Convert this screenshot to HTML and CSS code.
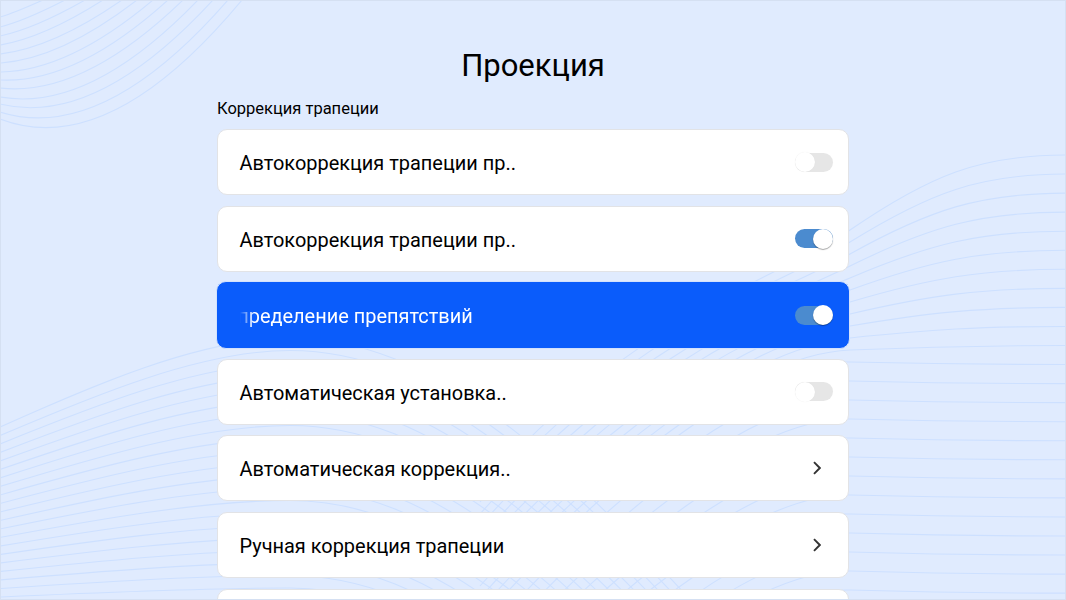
FILE: index.html
```html
<!DOCTYPE html>
<html lang="en">
<head>
    <meta charset="UTF-8">
    <meta name="viewport" content="width=device-width, initial-scale=1.0">
    <title>Проекция</title>
    <link rel="stylesheet" href="styles.css">
</head>
<body>
    <div class="screen">
        <svg class="wave-bg" id="wave-bg" width="1066" height="600" viewBox="0 0 1066 600" fill="none"></svg>

        <div class="main">
            <h1>Проекция</h1>
            <h2>Коррекция трапеции</h2>
            <div class="menu-list">
                <div class="menu-item">
                    <span class="menu-label">Автокоррекция трапеции пр..</span>
                    <span class="toggle"><span class="knob"></span></span>
                </div>
                <div class="menu-item">
                    <span class="menu-label">Автокоррекция трапеции пр..</span>
                    <span class="toggle on"><span class="knob"></span></span>
                </div>
                <div class="menu-item active">
                    <span class="menu-label marquee"><span class="marquee-text">Определение препятствий</span></span>
                    <span class="toggle on"><span class="knob"></span></span>
                </div>
                <div class="menu-item">
                    <span class="menu-label">Автоматическая установка..</span>
                    <span class="toggle"><span class="knob"></span></span>
                </div>
                <div class="menu-item">
                    <span class="menu-label">Автоматическая коррекция..</span>
                    <svg class="chevron" width="8" height="14" viewBox="0 0 8 14" fill="none"><path d="M1 1.2 L6.8 7 L1 12.8" stroke="#333" stroke-width="1.9"/></svg>
                </div>
                <div class="menu-item">
                    <span class="menu-label">Ручная коррекция трапеции</span>
                    <svg class="chevron" width="8" height="14" viewBox="0 0 8 14" fill="none"><path d="M1 1.2 L6.8 7 L1 12.8" stroke="#333" stroke-width="1.9"/></svg>
                </div>
                <div class="menu-item"></div>
            </div>
        </div>
    </div>

    <script src="waves.js"></script>
</body>
</html>
```

FILE: styles.css
```css
* {
    box-sizing: border-box;
}
body {
    margin: 0;
    font-family: Roboto, "Liberation Sans", sans-serif;
    color: #000;
}
.screen {
    position: relative;
    width: 1066px;
    height: 600px;
    overflow: hidden;
    background-color: #e0ebfe;
    border: 1px solid #d5e0f2;
}
.wave-bg {
    position: absolute;
    top: -1px;
    left: -1px;
}
.main {
    position: relative;
    width: 632px;
    margin: 0 auto;
}
h1 {
    margin: 0;
    padding-top: 44px;
    height: 89px;
    font-size: 31px;
    font-weight: 400;
    line-height: 42px;
    text-align: center;
}
h2 {
    margin: 0;
    height: 39px;
    padding-top: 7.5px;
    font-size: 16.5px;
    font-weight: 400;
    line-height: 22px;
}
.menu-list {
    display: flex;
    flex-direction: column;
    gap: 10.6px;
}
.menu-item {
    display: flex;
    flex: none;
    align-items: center;
    justify-content: space-between;
    height: 66px;
    padding: 0 15px 0 21.5px;
    background-color: #fff;
    border: 1px solid #e2e3e6;
    border-radius: 10px;
    font-size: 19.95px;
}
.menu-item.active {
    height: 68px;
    margin: -1px;
    padding: 0 16px 0 22.5px;
    background-color: #0a5cfb;
    border-color: #d3e2fd;
    color: #fff;
}
.menu-label {
    padding-top: 2px;
}
.marquee {
    width: 240px;
    overflow: hidden;
    white-space: nowrap;
    -webkit-mask-image: linear-gradient(to right, transparent, #000 14px);
    mask-image: linear-gradient(to right, transparent, #000 14px);
}
.marquee-text {
    display: block;
    margin-left: -16px;
}

.toggle {
    position: relative;
    width: 38px;
    height: 19px;
    border-radius: 10px;
    background-color: #e6e6e6;
}
.toggle.on {
    background-color: #4b8bcf;
}
.knob {
    position: absolute;
    top: -0.5px;
    left: 0;
    width: 20px;
    height: 20px;
    border-radius: 50%;
    background-color: #fff;
    box-shadow: 0 0 1px rgba(0,0,0,0.08);
}
.toggle.on .knob {
    left: 18px;
    box-shadow: 0 1px 1px rgba(0,0,0,0.35);
}
.chevron {
    margin-right: 12px;
}
```

FILE: waves.js
```js
var svg = document.getElementById('wave-bg');
var paths = [];

function addPath(d) {
    paths.push('<path d="' + d + '" stroke="#cde0ff" stroke-width="1.1"/>');
}

// top left corner
var leftY = [17, 27, 36, 45, 54, 63, 72, 80, 88, 97, 104, 112, 119];
var topX = [43, 65, 85, 103, 122, 137, 153, 168, 183, 198, 213, 228, 242];
leftY.forEach(function(y, i) {
    var t = i / 12;
    var x = topX[i];
    var c1y = y * (1 - 0.2 * (1 - t)) + 27 * t * t;
    var c2y = y * (0.93 - 0.5 * (1 - t));
    addPath('M0 ' + y + 'C' + x * 0.29 + ' ' + c1y + ' ' + x * 0.62 + ' ' + c2y + ' ' + x + ' 0');
});

// bottom left fan
for (var i = 0; i <= 20; i++) {
    var y0 = 427 + 8.5 * i;
    var peak = 338 + 12.5 * i;
    addPath('M0 ' + y0 + 'C90 ' + (y0 - (y0 - peak) * 0.45) + ' 200 ' + peak + ' 290 ' + peak +
        'C430 ' + peak + ' 560 ' + (peak + 110) + ' 760 ' + (peak + 340));
}

// right side fan
for (var j = 0; j <= 23; j++) {
    var r = 155 + 19.05 * j;
    var l = j <= 11 ? 230 + 12 * j : 362 + 19 * (j - 11);
    var s = (r + (l - r) * 0.27 - l) / -80;
    addPath('M1066 ' + r + 'C980 ' + r + ' 930 ' + (r + (l - r) * 0.27) + ' 850 ' + l +
        'C770 ' + (l + s * 80) + ' 640 ' + (l + 80) + ' 480 ' + (l + 260));
}

svg.innerHTML = paths.join('');
```
